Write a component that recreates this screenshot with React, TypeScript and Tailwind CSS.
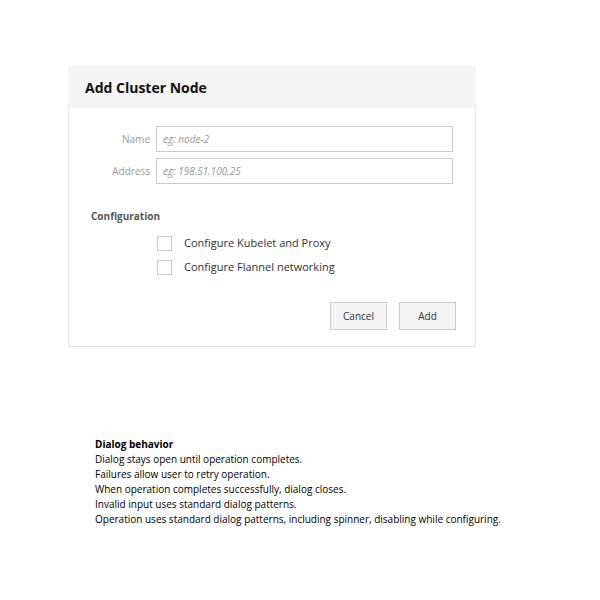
import React from "react";

export default function App() {
  return (
    <div className="w-[600px] h-[600px] bg-white relative" style={{ fontFamily: '"Open Sans", sans-serif' }}>
      <div className="pt-[66px] pl-[68px]">
        <div className="w-[408px]">
          <div className="h-[42px] bg-[#f5f5f5] flex items-center pl-[17px]">
            <h1 className="text-[14px] font-bold text-[#111]">Add Cluster Node</h1>
          </div>
          <div className="border border-t-0 border-[#e3e3e3] w-[408px] h-[239px] pt-[18px]">
            <div className="flex items-center h-[26px]">
              <label className="w-[87px] text-right pr-[6px] text-[10px] text-[#999]">Name</label>
              <div className="w-[297px] h-[26px] border border-[#ccc] flex items-center pl-[6px] text-[10px] italic text-[#999]">eg: node-2</div>
            </div>
            <div className="flex items-center h-[26px] mt-[6px]">
              <label className="w-[87px] text-right pr-[6px] text-[10px] text-[#999]">Address</label>
              <div className="w-[297px] h-[26px] border border-[#ccc] flex items-center pl-[6px] text-[10px] italic text-[#999]">eg: 198.51.100,25</div>
            </div>
            <div className="pl-[22px] mt-[25px] text-[10px] font-bold text-[#555]">Configuration</div>
            <div className="pl-[88px] mt-[12px] flex flex-col gap-[10px]">
              <div className="flex items-center h-[14px]">
                <div className="w-[15px] h-[15px] border border-[#ccc] bg-white" />
                <span className="ml-[12px] text-[11px] text-[#333]">Configure Kubelet and Proxy</span>
              </div>
              <div className="flex items-center h-[14px]">
                <div className="w-[15px] h-[15px] border border-[#ccc] bg-white" />
                <span className="ml-[12px] text-[11px] text-[#333]">Configure Flannel networking</span>
              </div>
            </div>
            <div className="flex justify-end gap-[12px] pr-[19px] mt-[28px]">
              <button className="w-[57px] h-[28px] bg-[#f5f5f5] border border-[#ccc] text-[10px] text-[#333]">Cancel</button>
              <button className="w-[57px] h-[28px] bg-[#f5f5f5] border border-[#ccc] text-[10px] text-[#333]">Add</button>
            </div>
          </div>
        </div>
      </div>
      <div className="pl-[95px] mt-[90px] text-[10px] leading-[15px] text-black">
        <div className="font-bold">Dialog behavior</div>
        <div>Dialog stays open until operation completes.</div>
        <div>Failures allow user to retry operation.</div>
        <div>When operation completes successfully, dialog closes.</div>
        <div>Invalid input uses standard dialog patterns.</div>
        <div>Operation uses standard dialog patterns, including spinner, disabling while configuring.</div>
      </div>
    </div>
  );
}
